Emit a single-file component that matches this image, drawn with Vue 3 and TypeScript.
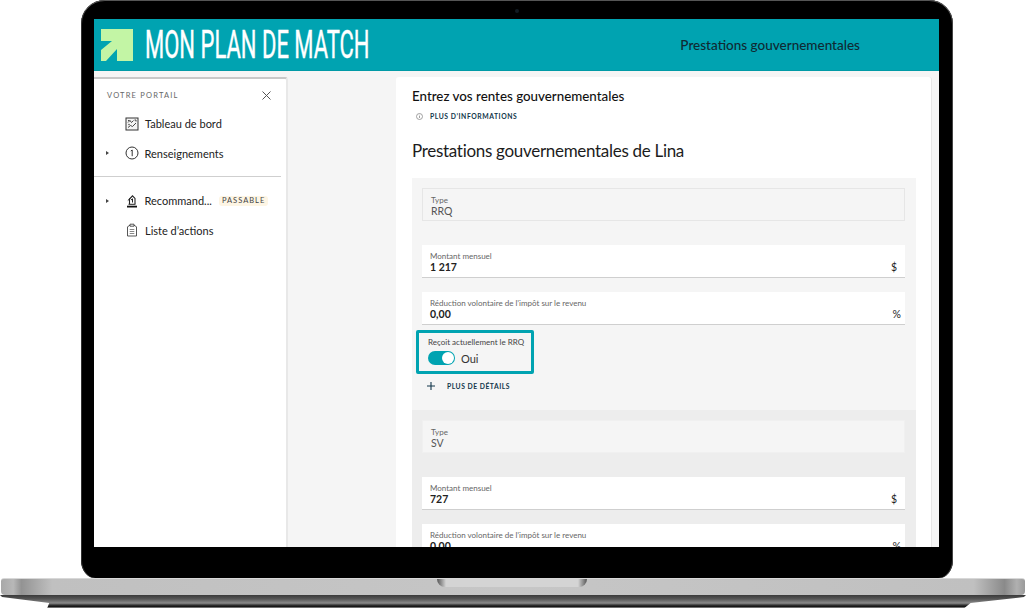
<template>
  <div class="stage">
    <div class="bezel">
      <span class="camera"></span>
      <div class="screen">
        <header class="topbar">
          <div class="brand">
            <svg class="logo" viewBox="0 0 32 32" width="32" height="32">
              <path fill="#c3f5a5" d="M0 0H32V32H16V20L5 32H0V21L11 12H0Z" />
            </svg>
            <span class="brand-name">MON PLAN DE MATCH</span>
          </div>
          <div class="page-title">Prestations gouvernementales</div>
        </header>

        <div class="body">
          <aside class="sidebar">
            <div class="side-head">
              <span>VOTRE PORTAIL</span>
              <svg width="9" height="9" viewBox="0 0 9 9"><path d="M.5.5l8 8M8.5.5l-8 8" stroke="#555" fill="none" /></svg>
            </div>

            <nav class="side-group">
              <div class="side-item">
                <span class="caret"></span>
                <svg class="side-icon" viewBox="0 0 14 14">
                  <rect x="1" y="1" width="12" height="12" fill="#f4f4f4" stroke="#333" />
                  <path d="M3 3.5h1.5M3 5.5l2-2 1.5 2 2-2M3 10.5l2.5-2 2 1 3.5-3.5M9.5 3h1.5v1.5" fill="none" stroke="#333" stroke-width=".9" />
                  <circle cx="4" cy="7.5" r=".7" fill="#333" />
                </svg>
                <span>Tableau de bord</span>
              </div>
              <div class="side-item">
                <span class="caret on"></span>
                <svg class="side-icon" viewBox="0 0 14 14">
                  <circle cx="7" cy="7" r="6" fill="none" stroke="#333" />
                  <path d="M5.8 5l1.4-1v6.2" fill="none" stroke="#333" />
                </svg>
                <span>Renseignements</span>
              </div>
            </nav>

            <hr class="side-rule" />

            <nav class="side-group">
              <div class="side-item">
                <span class="caret on"></span>
                <svg class="side-icon" viewBox="0 0 14 14">
                  <path d="M4.5 10V5L7.5 1.8 10 4.5V10" fill="none" stroke="#222" stroke-width="1.1" />
                  <path d="M2 12.6h10" stroke="#111" stroke-width="1.8" fill="none" />
                  <path d="M3.5 10.3h7" stroke="#222" fill="none" />
                  <path d="M2.8 6.5L5 4.5M6 6l1.5-1.2V8.5" fill="none" stroke="#222" />
                </svg>
                <span class="clip">Recommand...</span>
                <span class="tag">PASSABLE</span>
              </div>
              <div class="side-item">
                <span class="caret"></span>
                <svg class="side-icon" viewBox="0 0 14 14">
                  <path d="M5 2.2L2.5 3.8V13h9V3.8L9 2.2" fill="none" stroke="#444" stroke-width=".9" />
                  <path d="M5 1.2h4v2H5z" fill="#fff" stroke="#444" stroke-width=".9" />
                  <path d="M4.7 6.5h4.6M4.7 8.5h4.6M4.7 10.5h4.6" stroke="#555" fill="none" stroke-width=".7" />
                </svg>
                <span>Liste d’actions</span>
              </div>
            </nav>
          </aside>

          <div class="gutter"></div>

          <main class="panel">
            <h2 class="lead">Entrez vos rentes gouvernementales</h2>
            <div class="more-info">
              <svg width="7" height="7" viewBox="0 0 7 7">
                <circle cx="3.5" cy="3.5" r="3" fill="none" stroke="#8a8a8a" stroke-width=".8" />
                <path d="M3.5 3v2M3.5 1.8v.6" stroke="#8a8a8a" stroke-width=".8" />
              </svg>
              <span>PLUS D’INFORMATIONS</span>
            </div>
            <h1 class="heading">Prestations gouvernementales de Lina</h1>

            <section v-for="(g, i) in groups" :key="g.type" class="group" :class="{ alt: i === 1 }">
              <div class="field readonly">
                <label>Type</label>
                <div class="val">{{ g.type }}</div>
              </div>
              <div class="field input first">
                <label>Montant mensuel</label>
                <div class="row"><b>{{ g.amount }}</b><span>$</span></div>
              </div>
              <div class="field input">
                <label>Réduction volontaire de l’impôt sur le revenu</label>
                <div class="row"><b>0,00</b><span class="pct">%</span></div>
              </div>
              <template v-if="i === 0">
                <div class="callout">
                  <label>Reçoit actuellement le RRQ</label>
                  <div class="toggle-row">
                    <span class="toggle"><i></i></span>
                    <span>Oui</span>
                  </div>
                </div>
                <div class="details">
                  <svg width="8" height="8" viewBox="0 0 8 8"><path d="M4 0v8M0 4h8" stroke="#12364a" stroke-width="1.1" /></svg>
                  <span>PLUS DE DÉTAILS</span>
                </div>
              </template>
            </section>
          </main>
        </div>
      </div>
    </div>
    <div class="base">
      <div class="notch"></div>
    </div>
    <div class="base-under"></div>
  </div>
</template>

<script setup lang="ts">
const groups = [
  { type: 'RRQ', amount: '1 217' },
  { type: 'SV', amount: '727' },
];
</script>

<style>
html, body { margin: 0; background: #fff; overflow: hidden; }
</style>

<style scoped>
.stage {
  width: 1026px;
  height: 608px;
  font-family: "Lato", "Noto Sans", sans-serif;
  color: #1c1c1c;
  overflow: hidden;
  background: #fff;
}

.bezel {
  position: relative;
  box-sizing: border-box;
  width: 872px;
  height: 578px;
  margin-left: 81px;
  padding: 19px 14px 31px 13px;
  background: #000;
  border-radius: 24px 24px 14px 14px / 24px 24px 18px 18px;
  box-shadow: inset 0 1px 0 #555, inset 1px 0 0 #333, inset -1px 0 0 #444;
}
.camera {
  position: absolute;
  top: 9px;
  left: 434px;
  width: 4px;
  height: 4px;
  border-radius: 50%;
  background: #111a22;
}

.screen {
  height: 528px;
  background: #f5f5f5;
  overflow: hidden;
  display: flex;
  flex-direction: column;
}

.topbar {
  flex: none;
  height: 52px;
  background: #00a3b1;
  border-bottom: 1px solid #019aa6;
  box-sizing: border-box;
  display: flex;
  align-items: center;
  justify-content: space-between;
  padding: 0 79px 0 7px;
}
.brand { display: flex; align-items: center; gap: 12px; }
.logo { display: block; }
.brand-name {
  display: inline-block;
  font-family: "Roboto", sans-serif;
  font-size: 38px;
  line-height: 40px;
  font-weight: 400;
  color: #fff;
  -webkit-text-stroke: .4px #fff;
  transform: scaleX(0.579);
  transform-origin: left center;
  white-space: nowrap;
  width: 224px;
}
.page-title { font-size: 13.5px; font-weight: 500; color: #0f2a33; }

.body { flex: 1; display: flex; min-height: 0; padding-top: 6px; }

.sidebar {
  flex: none;
  width: 194px;
  background: #fff;
  border-top: 2px solid #c8c8c8;
  border-right: 2px solid #e8e8e8;
  box-sizing: border-box;
  border-radius: 0 3px 0 0;
}
.side-head {
  display: flex;
  justify-content: space-between;
  align-items: center;
  padding: 10px 15px 0 13px;
  height: 13px;
  font-size: 7.5px;
  letter-spacing: 1.2px;
  color: #666;
}
.side-group { display: flex; flex-direction: column; }
.side-head + .side-group { padding-top: 7px; }
.side-item {
  display: flex;
  align-items: center;
  height: 29.5px;
  padding-left: 12px;
  font-size: 11px;
  color: #222;
  white-space: nowrap;
}
.caret { width: 4px; height: 6px; flex: none; margin-right: 15px; }
.caret.on {
  width: 0;
  height: 0;
  border-left: 3.5px solid #444;
  border-top: 2.5px solid transparent;
  border-bottom: 2.5px solid transparent;
  margin-right: 15.5px;
}
.side-icon { width: 14px; height: 14px; flex: none; margin-right: 6px; }
.tag {
  margin-left: 7px;
  padding: 0 3px;
  height: 10px;
  line-height: 10px;
  font-size: 7.5px;
  letter-spacing: 1px;
  background: #fdf5e4;
  border-radius: 3px;
  color: #444;
}
.side-rule { border: 0; border-top: 1px solid #cfcfcf; margin: 8px 5px 9px 0; }

.gutter { flex: none; width: 108px; }

.panel {
  flex: none;
  width: 536px;
  box-sizing: border-box;
  background: #fff;
  border-top-left-radius: 3px;
  border-top-right-radius: 3px;
  padding: 11px 15px 0 16px;
  border-right: 1px solid #e6e6e6;
  overflow: hidden;
}
.lead { margin: 0; font-size: 13.35px; line-height: 17px; font-weight: 500; color: #111; }
.more-info {
  display: flex;
  align-items: center;
  gap: 7px;
  margin: 6px 0 0 4px;
  height: 10px;
  font-size: 6.8px;
  font-weight: 700;
  letter-spacing: .55px;
  color: #12364a;
}
.heading { margin: 18px 0 15px; font-size: 17px; line-height: 24px; font-weight: 400; letter-spacing: -.3px; color: #1c1c1c; }

.group { background: #f5f5f5; padding: 10px 11px 19px 10px; }
.group.alt { background: #ededed; }

.field { box-sizing: border-box; height: 33px; padding: 6px 8px 0; }
.field label { display: block; font-size: 8px; line-height: 10px; color: #666; }
.field .val { font-size: 10.5px; line-height: 12px; color: #555; }
.readonly { background: #f5f5f5; border: 1px solid #e6e6e6; }
.alt .readonly { background: #f5f5f5; border-color: #f0f0f0; }
.input { background: #fff; border-bottom: 1px solid #cfcfcf; margin-top: 14px; }
.input.first { margin-top: 24px; }
.row { display: flex; justify-content: space-between; font-size: 10.5px; line-height: 12px; color: #222; }
.row b { font-weight: 700; }
.row .pct { margin-right: -4px; }

.callout {
  box-sizing: border-box;
  width: 118px;
  height: 44px;
  margin: 5px 0 0 -6px;
  padding: 4px 9px 0;
  border: 3px solid #00a3b1;
  border-radius: 2px;
  white-space: nowrap;
}
.callout label { display: block; font-size: 8px; line-height: 11px; color: #444; }
.toggle-row { display: flex; align-items: center; gap: 6px; margin-top: 3px; font-size: 11px; color: #333; }
.toggle {
  position: relative;
  width: 27px;
  height: 14px;
  border-radius: 7px;
  background: #00a3b1;
  display: block;
}
.toggle i {
  position: absolute;
  top: 1px;
  right: 1px;
  width: 12px;
  height: 12px;
  border-radius: 50%;
  background: #fff;
}
.details {
  display: flex;
  align-items: center;
  gap: 12px;
  margin: 7px 0 0 5px;
  height: 10px;
  font-size: 6.8px;
  font-weight: 700;
  letter-spacing: .5px;
  color: #12364a;
}

.base {
  height: 17px;
  margin: 0 1px;
  background: linear-gradient(90deg, #a8a8a8 0, #b8b8b8 1.2%, #939393 2%, #c0c0c0 5%, #c6c6c6 50%, #c0c0c0 95%, #8a8a8a 98%, #b0b0b0 99.2%, #9a9a9a 100%);
  border-radius: 3px 3px 4px 4px;
  border-top: 1px solid #d8d8d8;
  box-sizing: border-box;
}
.notch {
  width: 150px;
  height: 8px;
  margin: 0 auto;
  transform: translateX(-1px);
  background: linear-gradient(90deg, #555, #d4d4d4 6%, #d4d4d4 94%, #555);
  border-radius: 0 0 8px 8px;
}
.base-under {
  height: 13px;
  background: linear-gradient(180deg, #3a3a3a, #555 30%, #8a8a8a 62%, #333 78%, #111 88%, #999 100%);
  clip-path: polygon(0 0, 100% 0, 99.8% 2px, 94.6% 8px, 94% 100%, 4.6% 100%, 4.8% 8px, .2% 2px);
}
</style>
